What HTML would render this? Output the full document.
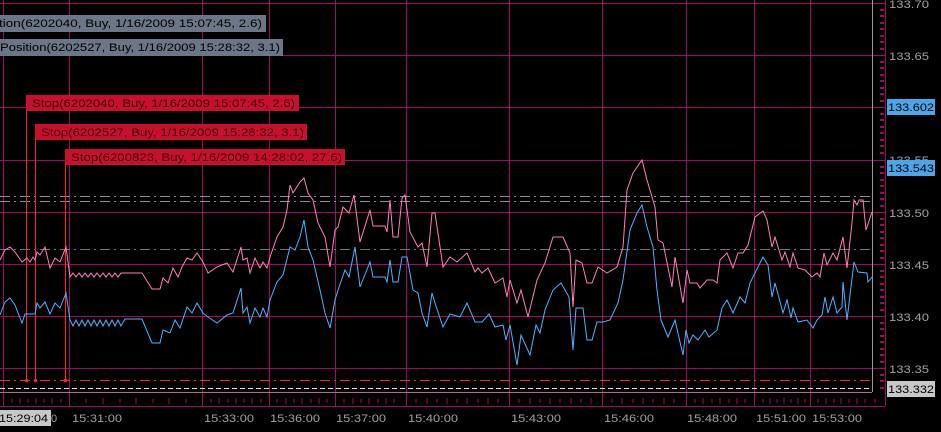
<!DOCTYPE html>
<html><head><meta charset="utf-8"><style>
html,body{margin:0;padding:0;background:#000;width:941px;height:432px;overflow:hidden}
svg{display:block}
text{font-family:"Liberation Sans","DejaVu Sans",sans-serif;font-size:11px}
</style></head><body>
<svg width="941" height="432" xmlns="http://www.w3.org/2000/svg">
<rect width="941" height="432" fill="#000"/>
<g stroke="#9c0b5e" stroke-width="1">
<line x1="3.5" y1="0" x2="3.5" y2="406"/>
<line x1="69.5" y1="0" x2="69.5" y2="406"/>
<line x1="202.5" y1="0" x2="202.5" y2="406"/>
<line x1="269.5" y1="0" x2="269.5" y2="406"/>
<line x1="335.5" y1="0" x2="335.5" y2="406"/>
<line x1="406.5" y1="0" x2="406.5" y2="406"/>
<line x1="509.5" y1="0" x2="509.5" y2="406"/>
<line x1="602.5" y1="0" x2="602.5" y2="406"/>
<line x1="686.5" y1="0" x2="686.5" y2="406"/>
<line x1="754.5" y1="0" x2="754.5" y2="406"/>
<line x1="810.5" y1="0" x2="810.5" y2="406"/>
<line x1="0" y1="3.5" x2="885" y2="3.5"/>
<line x1="0" y1="55.5" x2="885" y2="55.5"/>
<line x1="0" y1="107.5" x2="885" y2="107.5"/>
<line x1="0" y1="160.5" x2="885" y2="160.5"/>
<line x1="0" y1="212.5" x2="885" y2="212.5"/>
<line x1="0" y1="264.5" x2="885" y2="264.5"/>
<line x1="0" y1="316.5" x2="885" y2="316.5"/>
<line x1="0" y1="368.5" x2="885" y2="368.5"/>
<line x1="0" y1="406.5" x2="885" y2="406.5"/>
<line x1="885.5" y1="0" x2="885.5" y2="406"/>
<line x1="0" y1="392.5" x2="872" y2="392.5" stroke="#b06a90"/>
</g>
<line x1="872.5" y1="0" x2="872.5" y2="392" stroke="#999"/>
<g stroke="#9c0b5e" stroke-width="2">
<path d="M880 10h4M880 16h4M880 23h4M880 29h4M880 36h4M880 42h4M880 49h4M880 62h4M880 68h4M880 75h4M880 81h4M880 88h4M880 94h4M880 101h4M880 114h4M880 120h4M880 127h4M880 133h4M880 140h4M880 146h4M880 153h4M880 167h4M880 173h4M880 180h4M880 186h4M880 193h4M880 199h4M880 206h4M880 219h4M880 225h4M880 232h4M880 238h4M880 245h4M880 251h4M880 258h4M880 271h4M880 277h4M880 284h4M880 290h4M880 297h4M880 303h4M880 310h4M880 323h4M880 329h4M880 336h4M880 342h4M880 349h4M880 355h4M880 362h4M880 375h4M880 381h4M880 388h4"/>
</g>
<g stroke="#9c0b5e" stroke-width="1">
<path d="M12 399v4M20 398v6M28 399v4M36 398v6M44 399v4M52 398v6M61 399v4M86 399v4M103 398v6M120 399v4M136 398v6M153 399v4M169 398v6M186 399v4M211 399v4M219 398v6M228 399v4M236 398v6M244 399v4M252 398v6M261 399v4M277 399v4M286 398v6M294 399v4M302 398v6M311 399v4M319 398v6M327 399v4M344 399v4M353 398v6M361 399v4M369 398v6M378 399v4M386 398v6M394 399v4M416 399v4M427 398v6M437 399v4M447 398v6M457 399v4M467 398v6M478 399v4M488 398v6M498 399v4M519 399v4M530 398v6M540 399v4M550 398v6M560 399v4M571 398v6M581 399v4M591 398v6M612 399v4M622 398v6M633 399v4M643 398v6M653 399v4M664 398v6M674 399v4M695 399v4M703 398v6M712 399v4M720 398v6M729 399v4M737 398v6M745 399v4M763 399v4M770 398v6M777 399v4M784 398v6M791 399v4M798 398v6M805 399v4M818 399v4M826 398v6M834 399v4M841 398v6M849 399v4M857 398v6M865 399v4M875 399v4"/>
</g>
<g fill="none" stroke-width="1">
<line x1="0" y1="196.5" x2="872" y2="196.5" stroke="#8d8d9a" stroke-dasharray="10,4,2,4"/>
<line x1="0" y1="201.5" x2="872" y2="201.5" stroke="#8d8d9a" stroke-dasharray="10,4,2,4"/>
<line x1="0" y1="249.5" x2="872" y2="249.5" stroke="#707088" stroke-dasharray="10,4,2,4"/>
<line x1="0" y1="380.5" x2="872" y2="380.5" stroke="#ff2030" stroke-dasharray="10,4,2,4"/>
<line x1="0" y1="388.5" x2="872" y2="388.5" stroke="#e0e0e0" stroke-dasharray="5,3"/>
</g>
<g stroke="#ff2030" stroke-width="1">
<line x1="26.5" y1="111" x2="26.5" y2="380"/>
<line x1="35.5" y1="140" x2="35.5" y2="380"/>
<line x1="65.5" y1="165" x2="65.5" y2="380"/>
</g>
<g fill="#ff2030"><circle cx="26.5" cy="380.5" r="1.8"/><circle cx="35.5" cy="380.5" r="1.8"/><circle cx="65.5" cy="380.5" r="1.8"/></g>
<polyline fill="none" stroke="#ff7fb8" stroke-width="1" points="0,260 5,250 10,247 15,252 22,262 27,258 30,262 33,257 35,260 37,252 40,255 45,247 50,268 55,258 60,262 66,247 70,277 73,273 76,277 79,273 82,277 85,273 88,277 91,273 94,277 97,273 100,277 103,273 106,277 109,273 112,277 115,273 118,277 121,273 125,273 142,273 152,289 160,289 163,278 168,283 173,268 178,277 182,267 187,258 192,260 197,253 203,262 208,273 217,267 227,263 233,272 241,247 243,260 247,258 250,273 255,258 260,268 263,262 267,268 270,257 277,237 283,227 287,210 290,185 293,193 300,182 304,178 308,193 313,200 318,223 325,237 330,267 335,230 338,227 343,207 349,213 354,195 360,242 370,210 373,226 385,226 387,232 390,200 393,237 398,237 402,198 405,195 410,232 418,247 422,243 427,267 432,213 435,213 443,267 450,257 457,262 467,253 475,272 478,268 482,273 488,268 495,283 503,278 507,297 510,280 517,303 521,290 528,317 537,280 545,263 553,237 563,237 570,253 573,307 576,260 582,263 587,283 592,283 598,267 607,273 617,267 623,247 627,190 633,173 642,160 647,180 655,207 658,240 663,243 672,287 675,257 683,303 687,270 690,283 697,283 700,288 707,280 713,280 717,283 720,260 727,253 733,268 738,253 743,253 748,245 755,217 763,211 767,220 772,247 775,237 782,260 785,252 790,267 793,253 798,268 805,270 812,277 817,273 820,277 824,253 827,265 833,253 837,260 843,237 847,268 852,223 854,200 857,205 859,200 863,200 866,230 872,212"/>
<polyline fill="none" stroke="#4db3ff" stroke-width="1" points="0,315 5,302 10,298 15,305 22,323 25,314 35,314 37,303 40,308 45,302 50,314 55,303 60,308 66,293 70,320 73,326 76,320 79,326 82,320 85,326 88,320 91,326 94,320 97,326 100,320 103,326 106,320 109,326 112,320 115,326 118,320 121,326 125,319 142,319 152,343 160,343 163,330 170,333 175,320 180,328 187,307 192,313 197,303 203,313 208,317 217,323 227,315 233,313 241,288 243,313 247,307 250,323 255,308 260,317 263,308 267,317 270,300 277,282 283,275 290,247 295,250 300,237 304,220 308,247 313,260 320,290 325,313 330,328 335,300 338,290 345,270 349,277 355,247 360,287 370,262 373,277 385,277 387,282 390,260 393,282 398,282 402,257 407,257 413,290 418,293 422,313 427,327 432,293 435,303 443,327 450,314 460,317 467,303 475,322 482,322 489,314 495,327 503,325 506,340 510,325 517,365 521,335 530,355 536,325 540,333 545,310 553,290 561,283 569,297 573,350 576,308 583,308 587,340 592,340 597,322 603,322 610,320 618,303 623,280 630,230 637,213 642,205 647,227 653,247 657,290 661,320 668,337 675,320 683,355 686,330 689,343 693,335 698,340 705,330 709,337 717,330 722,308 727,300 733,313 740,297 745,303 750,283 755,273 763,257 768,265 772,297 775,283 783,313 787,300 791,318 793,308 798,322 807,320 813,328 817,320 822,315 825,297 828,313 833,297 837,313 842,307 843,282 847,320 854,262 858,272 867,273 868,282 872,277"/>
<rect x="0" y="15" width="266" height="17" fill="#6b7686"/>
<text x="-4" y="27" fill="#000" textLength="266" lengthAdjust="spacingAndGlyphs">ition(6202040, Buy, 1/16/2009 15:07:45, 2.6)</text>
<rect x="0" y="39" width="283" height="17" fill="#6b7686"/>
<text x="0" y="51" fill="#000" textLength="280" lengthAdjust="spacingAndGlyphs">Position(6202527, Buy, 1/16/2009 15:28:32, 3.1)</text>
<rect x="26" y="95" width="273" height="16" fill="#c8102e"/>
<text x="32" y="107" fill="#3a0008" textLength="263" lengthAdjust="spacingAndGlyphs">Stop(6202040, Buy, 1/16/2009 15:07:45, 2.6)</text>
<rect x="35" y="124" width="272" height="16" fill="#c8102e"/>
<text x="41" y="136" fill="#3a0008" textLength="263" lengthAdjust="spacingAndGlyphs">Stop(6202527, Buy, 1/16/2009 15:28:32, 3.1)</text>
<rect x="65" y="149" width="280" height="16" fill="#c8102e"/>
<text x="71" y="161" fill="#3a0008" textLength="271" lengthAdjust="spacingAndGlyphs">Stop(6200823, Buy, 1/16/2009 14:28:02, 27.6)</text>
<g fill="#a0a0a0">
<text x="889" y="8" textLength="40" lengthAdjust="spacingAndGlyphs">133.70</text>
<text x="889" y="60" textLength="40" lengthAdjust="spacingAndGlyphs">133.65</text>
<text x="889" y="164" textLength="40" lengthAdjust="spacingAndGlyphs">133.55</text>
<text x="889" y="217" textLength="40" lengthAdjust="spacingAndGlyphs">133.50</text>
<text x="889" y="269" textLength="40" lengthAdjust="spacingAndGlyphs">133.45</text>
<text x="889" y="321" textLength="40" lengthAdjust="spacingAndGlyphs">133.40</text>
<text x="889" y="373" textLength="40" lengthAdjust="spacingAndGlyphs">133.35</text>
</g>
<rect x="887" y="99" width="48" height="16" fill="#4aa6e8"/>
<text x="888" y="111" fill="#000" textLength="46" lengthAdjust="spacingAndGlyphs">133.602</text>
<rect x="887" y="160" width="48" height="16" fill="#4aa6e8"/>
<text x="888" y="172" fill="#000" textLength="46" lengthAdjust="spacingAndGlyphs">133.543</text>
<rect x="887" y="381" width="48" height="16" fill="#c8c8c8"/>
<text x="888" y="393" fill="#000" textLength="46" lengthAdjust="spacingAndGlyphs">133.332</text>
<g fill="#a0a0a0">
<text x="51" y="422">0</text>
<text x="72" y="422" textLength="50" lengthAdjust="spacingAndGlyphs">15:31:00</text>
<text x="204" y="422" textLength="50" lengthAdjust="spacingAndGlyphs">15:33:00</text>
<text x="270" y="422" textLength="50" lengthAdjust="spacingAndGlyphs">15:36:00</text>
<text x="336" y="422" textLength="50" lengthAdjust="spacingAndGlyphs">15:37:00</text>
<text x="408" y="422" textLength="50" lengthAdjust="spacingAndGlyphs">15:40:00</text>
<text x="511" y="422" textLength="50" lengthAdjust="spacingAndGlyphs">15:43:00</text>
<text x="604" y="422" textLength="50" lengthAdjust="spacingAndGlyphs">15:46:00</text>
<text x="687" y="422" textLength="50" lengthAdjust="spacingAndGlyphs">15:48:00</text>
<text x="756" y="422" textLength="50" lengthAdjust="spacingAndGlyphs">15:51:00</text>
<text x="812" y="422" textLength="50" lengthAdjust="spacingAndGlyphs">15:53:00</text>
</g>
<rect x="0" y="410" width="51" height="16" fill="#c8c8c8"/>
<text x="-1" y="422" fill="#000" textLength="49" lengthAdjust="spacingAndGlyphs">15:29:04</text>
</svg>
</body></html>
